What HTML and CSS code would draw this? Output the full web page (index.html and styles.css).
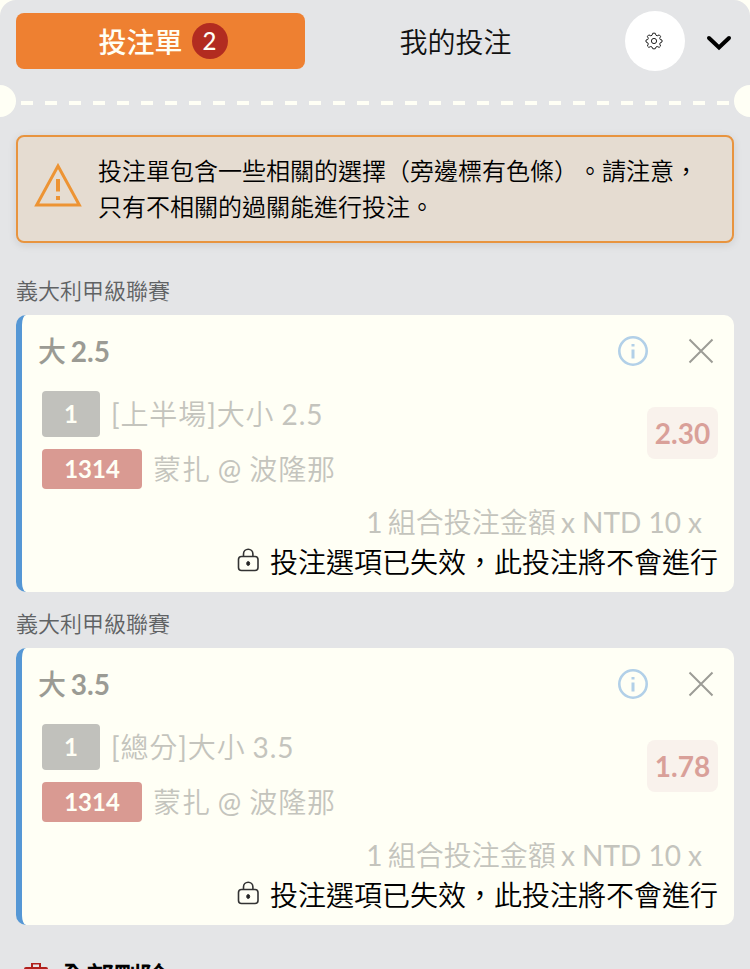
FILE: index.html
```html
<!DOCTYPE html>
<html lang="zh-Hant">
<head>
    <meta charset="UTF-8">
    <meta name="viewport" content="width=device-width,initial-scale=1">
    <title>投注單</title>
    <link rel="stylesheet" href="styles.css">
</head>
<body>
    <div class="betslip">
        <header class="tabs">
            <a class="tab active" href="#">投注單<span class="count">2</span></a>
            <a class="tab" href="#">我的投注</a>
            <button class="settings">
                <svg width="18" height="18" viewBox="0 0 18 18" fill="none" stroke="#222" stroke-width="1">
                    <path d="M7 3.300 7.800 1.200h2.400L11 3.300l1.200.5 2-.9 1.400 1.400-.9 2 .5 1.200 1.800.5v2l-1.800.8-.5 1.200.9 2-1.400 1.400-2-.9-1.200.5-.8 1.800H7.800L7 15l-1.200-.5-2 .9L2.400 14l.9-2-.5-1.200L1 10V8l1.800-.5.5-1.200-.9-2 1.400-1.400 2 .9z"/>
                    <circle cx="9" cy="9" r="2.600"/>
                </svg>
            </button>
            <svg class="chevron" width="26" height="16" viewBox="0 0 26 16" fill="none" stroke="#000" stroke-width="4">
                <path stroke-linecap="round" d="M3 3 13 12.500 23 3"/>
            </svg>
        </header>
        <div class="divider">
            <span class="notch"></span>
            <span class="dashes"></span>
            <span class="notch"></span>
        </div>
        <main>
            <div class="alert">
                <svg width="48" height="44" viewBox="0 0 48 44" fill="none" stroke="#ed9434">
                    <path stroke-width="3" d="M24 3 45.300 42H2.700z"/>
                    <path stroke-width="4" d="M24 16v12.500M24 33v4"/>
                </svg>
                <p>投注單包含一些相關的選擇（旁邊標有色條）。請注意，只有不相關的過關能進行投注。</p>
            </div>

            <h2 class="league">義大利甲級聯賽</h2>
            <section class="bet">
                <div class="bet-head">
                    <h3>大 2.5</h3>
                    <svg class="info" width="30" height="30" viewBox="0 0 30 30" fill="none" stroke="#b2d0e8">
                        <circle cx="15" cy="15" r="13.700" stroke-width="2.600"/>
                        <path stroke-width="3" d="M15 13.500v9M15 8v2.500"/>
                    </svg>
                    <svg class="close" width="26" height="26" viewBox="0 0 26 26" fill="none" stroke="#9c9c96" stroke-width="2">
                        <path d="m1.500 1.500 23 23m0-23-23 23"/>
                    </svg>
                </div>
                <div class="bet-body">
                    <div class="selection">
                        <p><span class="tag">1</span>[上半場]大小 2.5</p>
                        <p><span class="tag event">1314</span>蒙扎 @ 波隆那</p>
                    </div>
                    <span class="odds">2.30</span>
                </div>
                <p class="stake"><span>1 組合投注金額 </span>x NTD 10 x</p>
                <p class="locked">
                    <svg width="24" height="26" viewBox="0 0 24 26" fill="none" stroke="#333" stroke-width="1.600">
                        <rect x="2.500" y="9.500" width="19.500" height="14" rx="3"/>
                        <path d="M7.500 9.500V7a4.700 4.700 0 0 1 9.400 0v2.500"/>
                        <ellipse cx="12.200" cy="16.500" rx="1.500" ry="2" fill="#222" stroke-width="1"/>
                    </svg>
                    投注選項已失效，此投注將不會進行
                </p>
            </section>

            <h2 class="league">義大利甲級聯賽</h2>
            <section class="bet">
                <div class="bet-head">
                    <h3>大 3.5</h3>
                    <svg class="info" width="30" height="30" viewBox="0 0 30 30" fill="none" stroke="#b2d0e8">
                        <circle cx="15" cy="15" r="13.700" stroke-width="2.600"/>
                        <path stroke-width="3" d="M15 13.500v9M15 8v2.500"/>
                    </svg>
                    <svg class="close" width="26" height="26" viewBox="0 0 26 26" fill="none" stroke="#9c9c96" stroke-width="2">
                        <path d="m1.500 1.500 23 23m0-23-23 23"/>
                    </svg>
                </div>
                <div class="bet-body">
                    <div class="selection">
                        <p><span class="tag">1</span>[總分]大小 3.5</p>
                        <p><span class="tag event">1314</span>蒙扎 @ 波隆那</p>
                    </div>
                    <span class="odds">1.78</span>
                </div>
                <p class="stake"><span>1 組合投注金額 </span>x NTD 10 x</p>
                <p class="locked">
                    <svg width="24" height="26" viewBox="0 0 24 26" fill="none" stroke="#333" stroke-width="1.600">
                        <rect x="2.500" y="9.500" width="19.500" height="14" rx="3"/>
                        <path d="M7.500 9.500V7a4.700 4.700 0 0 1 9.400 0v2.500"/>
                        <ellipse cx="12.200" cy="16.500" rx="1.500" ry="2" fill="#222" stroke-width="1"/>
                    </svg>
                    投注選項已失效，此投注將不會進行
                </p>
            </section>

            <a class="delete-all" href="#">
                <svg width="26" height="30" viewBox="0 0 26 30" fill="#b0201c">
                    <path d="M8 5V1h10v4h5q2 0 2 2v3H1V7q0-2 2-2zm2 0h6V2.500h-6zM3 12h20l-2 18H5z"/>
                </svg>
                全部刪除
            </a>
        </main>
    </div>
</body>
</html>
```
FILE: styles.css
```css
* {
    box-sizing: border-box;
}
body {
    margin: 0;
    height: 969px;
    overflow: hidden;
    background: #fffff5;
    font-family: Lato, "Noto Sans CJK TC DemiLight", "Noto Sans CJK TC", sans-serif;
    font-size: 28px;
    color: #111;
    text-spacing-trim: space-all;
}
h2, h3, p {
    margin: 0;
}
a {
    color: inherit;
    text-decoration: none;
}
svg {
    flex: none;
}
.betslip {
    height: 969px;
    overflow: hidden;
    background: #e4e5e7;
    border-radius: 16px 16px 0 0;
}
.tabs {
    display: flex;
    align-items: center;
    height: 82px;
    padding-left: 16px;
}
.tab {
    display: flex;
    align-items: center;
    justify-content: center;
    width: 289px;
    height: 56px;
    margin-right: 6px;
    padding-bottom: 1px;
    border-radius: 8px;
}
.tab.active {
    padding-left: 5px;
    background: #ee8031;
    color: #fffff5;
    font-family: Lato, "Noto Sans CJK TC Medium", "Noto Sans CJK TC", sans-serif;
    font-weight: 500;
}
.count {
    width: 36px;
    height: 36px;
    margin: 1px 0 0 9px;
    border-radius: 50%;
    background: #b22c20;
    font-size: 24px;
    line-height: 35px;
    text-align: center;
}
.settings {
    display: flex;
    align-items: center;
    justify-content: center;
    width: 60px;
    height: 60px;
    margin-left: 19px;
    padding: 0 2px 0 0;
    border: 0;
    border-radius: 50%;
    background: #fff;
}
.chevron {
    margin: 3px 0 0 21px;
}
.divider {
    display: flex;
    align-items: center;
    height: 38px;
    margin: 0 -16px;
}
.notch {
    width: 32px;
    height: 32px;
    border-radius: 50%;
    background: #fffff5;
}
.dashes {
    flex: 1;
    height: 4px;
    margin: 3px 5px 0;
    background: repeating-linear-gradient(90deg, #fffff5 0 12px, transparent 12px 24px);
}
main {
    padding: 15px 16px 0;
}
.alert {
    display: flex;
    align-items: center;
    gap: 16px;
    height: 108px;
    padding: 0 20px 1px 16px;
    border: 2px solid #e8943f;
    border-radius: 8px;
    background: #e5dcd1;
    box-shadow: 0 2px 8px rgba(0,0,0,0.1);
    font-size: 24px;
    line-height: 36px;
    color: #000;
}
.alert svg {
    margin-top: -7px;
}
.league {
    height: 56px;
    padding-top: 16px;
    font-size: 22px;
    font-weight: 400;
    line-height: 32px;
    color: #606264;
}
.alert + .league {
    height: 72px;
    padding-top: 32px;
}
.bet {
    height: 277px;
    padding: 16px 16px 0 16px;
    border-left: 6px solid #5597d5;
    border-radius: 10px;
    background: #fffff5;
}
.bet-head {
    display: flex;
    align-items: center;
    height: 40px;
    padding-right: 4px;
}
.bet-head h3 {
    flex: 1;
    margin-top: -2px;
    font-family: Lato, "Noto Sans CJK TC Medium", "Noto Sans CJK TC", sans-serif;
    font-size: 28px;
    font-weight: 700;
    word-spacing: -2px;
    color: #9b9b94;
}
.close {
    margin-left: 40px;
}
.bet-body {
    display: flex;
    height: 118px;
    padding: 20px 0 0 4px;
    color: #c4c4bd;
}
.selection {
    flex: 1;
    letter-spacing: 0.9px;
    word-spacing: -1px;
}
.selection p {
    display: flex;
    align-items: center;
    height: 46px;
    padding-bottom: 1px;
    line-height: 40px;
}
.selection p + p {
    height: 40px;
    margin-top: 12px;
}
.tag {
    width: 58px;
    height: 46px;
    margin: 1px 11px 0 0;
    border-radius: 4px;
    background: #c1c1bc;
    color: #fffff5;
    font-size: 24px;
    font-weight: 700;
    line-height: 46px;
    letter-spacing: 0;
    text-align: center;
}
.tag.event {
    width: 100px;
    height: 40px;
    background: #d99a92;
    line-height: 40px;
}
.odds {
    width: 71px;
    height: 52px;
    margin-top: 16px;
    border-radius: 8px;
    background: #f9f2ec;
    color: #d9a099;
    font-weight: 700;
    line-height: 52px;
    text-align: center;
}
.stake {
    height: 53px;
    padding: 13px 16px 0 0;
    line-height: 40px;
    text-align: right;
    color: #c4c4bd;
}
.stake span {
    word-spacing: -2px;
}
.locked {
    display: flex;
    align-items: center;
    justify-content: flex-end;
    gap: 10px;
    height: 40px;
    line-height: 40px;
    color: #000;
}
.locked svg {
    margin-top: -4px;
}
.delete-all {
    display: flex;
    align-items: center;
    gap: 10px;
    padding: 32px 0 0 7px;
    font-weight: 900;
    line-height: 40px;
    letter-spacing: -1px;
    color: #000;
}
```
